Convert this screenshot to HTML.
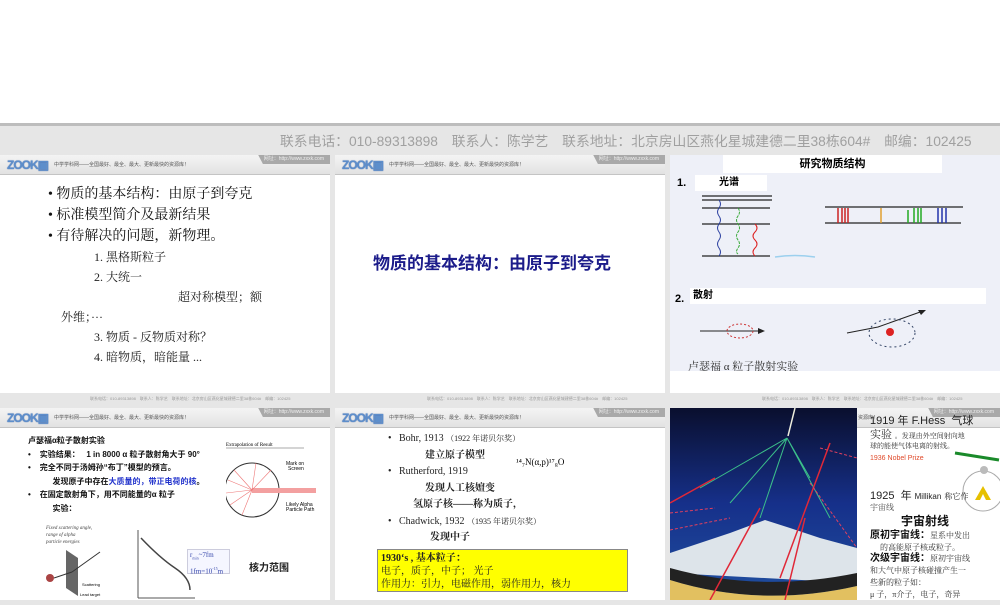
<!DOCTYPE html>
<html><head><meta charset="utf-8"><style>
*{margin:0;padding:0;box-sizing:border-box}
body{width:1000px;height:600px;overflow:hidden;background:#fff;position:relative;font-family:"Liberation Sans","Noto Sans CJK SC",sans-serif}
.a{position:absolute}
.band{left:0;top:123px;width:1000px;height:482px;background:#e6e6e6;border-top:3px solid #bdbdbd}
.slide{background:#fff;overflow:hidden}
.hdr{position:absolute;left:0;top:0;width:100%;height:20px;background:linear-gradient(#f4f4f4,#e2e2e2);border-bottom:1px solid #c4c4c4}
.logo{position:absolute;left:7px;top:3px;font:bold 12px "Liberation Sans",sans-serif;color:#5d8ecb;letter-spacing:-1px;text-shadow:0 0 1px #1d4d9b}
.htx{position:absolute;left:54px;top:6px;font-size:5px;color:#555;white-space:nowrap}
.url{position:absolute;right:0;top:0;width:78px;height:9px;background:#a9a9a9;color:#eee;font-size:5px;line-height:9px;text-align:right;padding-right:6px;clip-path:polygon(8% 0,100% 0,100% 100%,14% 100%)}
.ftr{position:absolute;font-size:4px;color:#999;white-space:nowrap}
.cn{font-family:"Liberation Serif","Noto Serif CJK SC",serif}
.l{position:absolute;white-space:nowrap;line-height:1}
</style></head><body>
<div class="a band"></div>
<div class="a" style="left:280px;top:130px;font-size:13.8px;color:#a0a0a0;white-space:nowrap">联系电话：010-89313898　联系人：陈学艺　联系地址：北京房山区燕化星城建德二里38栋604#　邮编：102425</div>

<div class="a slide" style="left:0;top:155px;width:330px;height:238px">
 <div class="hdr"><div class="logo">ZOOK▣</div><div class="htx">中学学科网——全国最好、最全、最大、更新最快的资源库！</div><div class="url">网址：http://www.zxxk.com</div></div>
 <div class="a cn" style="left:48px;top:29px;font-size:14px;line-height:21px;color:#111">• 物质的基本结构：由原子到夸克<br>• 标准模型简介及最新结果<br>• 有待解决的问题，新物理。</div>
 <div class="a cn" style="left:94px;top:92px;font-size:12px;line-height:20px;color:#222">1. 黑格斯粒子<br>2. 大统一</div>
 <div class="a cn" style="left:178px;top:133px;font-size:12px;color:#222">超对称模型；额</div>
 <div class="a cn" style="left:61px;top:153px;font-size:12px;color:#222">外维；···</div>
 <div class="a cn" style="left:94px;top:172px;font-size:12px;line-height:20px;color:#222">3. 物质 - 反物质对称？<br>4. 暗物质，暗能量 ...</div>
</div>
<div class="a slide" style="left:335px;top:155px;width:330px;height:238px">
 <div class="hdr"><div class="logo">ZOOK▣</div><div class="htx">中学学科网——全国最好、最全、最大、更新最快的资源库！</div><div class="url">网址：http://www.zxxk.com</div></div>
 <div class="a" style="left:38px;top:94px;font-size:17px;font-weight:bold;color:#1c1c8a;white-space:nowrap">物质的基本结构：由原子到夸克</div>
</div>
<div class="a slide" style="left:670px;top:155px;width:330px;height:238px;background:#eef0f8">
 <div class="a" style="left:53px;top:0;width:219px;height:18px;background:#fff;text-align:center;font-size:11px;font-weight:bold;line-height:18px">研究物质结构</div>
 <div class="a" style="left:7px;top:22px;font-weight:bold;font-size:11px">1.</div>
 <div class="a" style="left:25px;top:20px;width:72px;height:16px;background:#fff;font-size:10px;font-weight:bold;line-height:16px;padding-left:24px">光谱</div>
 <svg class="a" style="left:0;top:0" width="330" height="238">
  <g stroke="#222" stroke-width="1.2"><line x1="32" y1="41" x2="102" y2="41"/><line x1="32" y1="45" x2="102" y2="45"/><line x1="32" y1="53" x2="100" y2="53"/><line x1="32" y1="69" x2="100" y2="69"/><line x1="32" y1="101" x2="100" y2="101"/>
  <line x1="155" y1="52" x2="293" y2="52"/><line x1="155" y1="68" x2="291" y2="68"/></g>
  <path d="M49 45 q3 4 0 8 q-3 4 0 8 q3 4 0 8 q-3 4 0 8 q3 4 0 8 q-3 4 0 8 q3 4 0 8" stroke="#2a3fa0" fill="none"/>
  <path d="M68 53 q3 4 0 8 q-3 4 0 8 q3 4 0 8 q-3 4 0 8 q3 4 0 8 q-3 4 0 6" stroke="#3aaa3a" fill="none" stroke-dasharray="3 1"/>
  <path d="M85 69 q4 4 0 8 q-4 4 0 8 q4 4 0 8 q-4 4 0 8" stroke="#d22" fill="none"/>
  <path d="M105 102 q20 -3 40 0" stroke="#9cd0ee" fill="none" stroke-width="1.5"/>
  <g stroke-width="1.5"><path d="M168 53v15M172 53v15M175 53v15M178 53v15" stroke="#c22"/><path d="M211 53v15" stroke="#e0a030"/><path d="M238 55v13M244 53v15M248 53v15M251 53v15" stroke="#2a2"/><path d="M268 53v15M272 53v15M276 53v15" stroke="#23a"/></g>
  <path d="M30 176 H92" stroke="#222"/><path d="M95 176 l-7 -3 v6z" fill="#222"/>
  <ellipse cx="70" cy="176" rx="13" ry="7" fill="none" stroke="#c33" stroke-dasharray="2 2"/>
  <path d="M177 178 L208 172 L253 156" stroke="#222" fill="none"/><path d="M256 155 l-8 0 l3 5z" fill="#222"/>
  <circle cx="220" cy="177" r="4" fill="#d22"/>
  <ellipse cx="222" cy="178" rx="23" ry="14" fill="none" stroke="#346" stroke-dasharray="2 3"/>
 </svg>
 <div class="a" style="left:5px;top:138px;font-weight:bold;font-size:11px">2.</div>
 <div class="a" style="left:20px;top:133px;width:296px;height:16px;background:#fff;font-size:10px;font-weight:bold;line-height:16px;padding-left:3px">散射</div>
 <div class="a cn" style="left:18px;top:203px;font-size:11px;color:#333">卢瑟福 α 粒子散射实验</div>
 <div class="a" style="left:0;top:216px;width:330px;height:22px;background:#fff"></div>
</div>

<div class="ftr" style="left:90px;top:396px">联系电话：010-89313898　联系人：陈学艺　联系地址：北京房山区燕化星城建德二里38栋604#　邮编：102425</div>
<div class="ftr" style="left:427px;top:396px">联系电话：010-89313898　联系人：陈学艺　联系地址：北京房山区燕化星城建德二里38栋604#　邮编：102425</div>
<div class="ftr" style="left:762px;top:396px">联系电话：010-89313898　联系人：陈学艺　联系地址：北京房山区燕化星城建德二里38栋604#　邮编：102425</div>

<div class="a slide" style="left:0;top:408px;width:330px;height:192px">
 <div class="hdr"><div class="logo">ZOOK▣</div><div class="htx">中学学科网——全国最好、最全、最大、更新最快的资源库！</div><div class="url">网址：http://www.zxxk.com</div></div>
 <div class="a" style="left:28px;top:26px;font-size:8px;font-weight:bold;line-height:13.5px;color:#111;white-space:nowrap">卢瑟福α粒子散射实验<br>•&nbsp;&nbsp;&nbsp; 实验结果：&nbsp;&nbsp; 1 in 8000 α 粒子散射角大于 90°<br>•&nbsp;&nbsp;&nbsp; 完全不同于汤姆孙“布丁”模型的预言。<br>&nbsp;&nbsp;&nbsp;&nbsp;&nbsp;&nbsp;&nbsp;&nbsp;&nbsp;&nbsp;&nbsp;发现原子中存在<span style="color:#2233cc">大质量的，带正电荷的核</span>。<br>•&nbsp;&nbsp;&nbsp; 在固定散射角下，用不同能量的α 粒子<br>&nbsp;&nbsp;&nbsp;&nbsp;&nbsp;&nbsp;&nbsp;&nbsp;&nbsp;&nbsp;&nbsp;实验：</div>
 <svg class="a" style="left:226px;top:30px" width="100" height="110">
  <text x="0" y="8" font-size="5" font-family="Liberation Serif">Extrapolation of Result</text><line x1="0" y1="10" x2="78" y2="10" stroke="#aaa"/>
  <circle cx="26" cy="52" r="27" fill="none" stroke="#333"/>
  <rect x="26" y="50" width="64" height="5" fill="#f3a0a0"/>
  <g stroke="#e77" stroke-width=".6"><line x1="26" y1="52" x2="8" y2="32"/><line x1="26" y1="52" x2="2" y2="42"/><line x1="26" y1="52" x2="0" y2="55"/><line x1="26" y1="52" x2="4" y2="67"/><line x1="26" y1="52" x2="16" y2="77"/><line x1="26" y1="52" x2="30" y2="25"/><line x1="26" y1="52" x2="45" y2="32"/></g>
  <text x="60" y="27" font-size="5">Mark on</text><text x="62" y="32" font-size="5">Screen</text>
  <text x="60" y="68" font-size="5">Likely Alpha</text><text x="60" y="73" font-size="5">Particle Path</text>
 </svg>
 <div class="a" style="left:46px;top:117px;font-size:5px;font-style:italic;font-family:'Liberation Serif';line-height:7px;color:#444">Fixed scattering angle,<br>range of alpha<br>particle energies</div>
 <svg class="a" style="left:44px;top:140px" width="70" height="52"><polygon points="22,2 34,10 34,48 22,40" fill="#666"/><circle cx="6" cy="30" r="4" fill="#a44"/><line x1="10" y1="30" x2="28" y2="24" stroke="#333"/><line x1="28" y1="24" x2="56" y2="4" stroke="#333"/><text x="38" y="38" font-size="4">Scattering</text><text x="36" y="48" font-size="4">Lead target</text></svg>
 <svg class="a" style="left:135px;top:120px" width="60" height="72"><line x1="3" y1="2" x2="3" y2="70" stroke="#555"/><line x1="3" y1="70" x2="60" y2="70" stroke="#555"/><path d="M6 10 Q25 30 40 40 T55 62" stroke="#444" fill="none" stroke-width="1.5"/></svg>
 <div class="a" style="left:187px;top:141px;width:43px;height:25px;border:1px solid #ccd;background:#f5f6ff;font:7px 'Liberation Serif',serif;color:#3344aa;line-height:11px;padding-left:2px">r<sub style="font-size:4px">min</sub>~7fm<br>1fm=10<sup style="font-size:4px">-15</sup>m</div>
 <div class="a" style="left:249px;top:151px;font-size:10px;font-weight:bold;color:#222">核力范围</div>
</div>
<div class="a slide" style="left:335px;top:408px;width:330px;height:192px">
 <div class="hdr"><div class="logo">ZOOK▣</div><div class="htx">中学学科网——全国最好、最全、最大、更新最快的资源库！</div><div class="url">网址：http://www.zxxk.com</div></div>
 <div class="a cn" style="left:53px;top:23px;font-size:10px;line-height:16.5px;color:#222;white-space:nowrap">•&nbsp;&nbsp; Bohr, 1913 <span style="font-size:8px">（1922 年诺贝尔奖）</span><br><b style="margin-left:37px">建立原子模型</b><br>•&nbsp;&nbsp; Rutherford, 1919<br><b style="margin-left:37px">发现人工核嬗变</b><br><b style="margin-left:25px">氢原子核——称为质子，</b><br>•&nbsp;&nbsp; Chadwick, 1932 <span style="font-size:8px">（1935 年诺贝尔奖）</span><br><b style="margin-left:42px">发现中子</b></div>
 <div class="a cn" style="left:181px;top:49px;font-size:9px">¹⁴₇N(α,p)¹⁷₈O</div>
 <div class="a" style="left:42px;top:141px;width:251px;height:43px;background:#ffff00;border:1px solid #888;font:10px 'Liberation Serif','Noto Serif CJK SC',serif;line-height:13px;padding:2px 3px;color:#222;white-space:nowrap"><b>1930‘s , 基本粒子：</b><br>电子，质子，中子； 光子<br>作用力：引力，电磁作用，弱作用力，核力</div>
</div>
<div class="a slide" style="left:670px;top:408px;width:330px;height:192px">
 <div class="hdr" style="left:187px;width:143px"><div class="url">网址：http://www.zxxk.com</div><div class="htx" style="left:1px">资源库！</div></div>
 <svg class="a" style="left:0;top:0" width="187" height="192">
  <defs><linearGradient id="sk" x1="0" y1="0" x2="0" y2="1"><stop offset="0" stop-color="#0a0f2e"/><stop offset=".5" stop-color="#16308a"/><stop offset="1" stop-color="#2050a0"/></linearGradient></defs>
  <rect width="187" height="192" fill="url(#sk)"/>
  <path d="M0 145 L30 135 L60 125 L95 112 L120 120 L150 130 L187 140 L187 175 L0 165Z" fill="#dde4ea"/>
  <path d="M0 160 Q90 185 187 165 L187 178 Q90 200 0 172Z" fill="#222"/>
  <path d="M0 172 Q90 200 187 178 L187 192 L0 192Z" fill="#e2c060"/>
  <g stroke="#3bbf8a" stroke-width="1" fill="none"><path d="M117 30 L30 80M117 30 L60 95M117 30 L90 110M117 30 L140 70M117 30 L160 110M117 30 L100 80"/></g>
  <g stroke="#e02838" stroke-width="1.5" fill="none"><path d="M45 70 L0 95M90 100 L40 192M160 35 L110 170M135 110 L115 192"/></g>
  <g stroke="#e04060" stroke-dasharray="3 2" fill="none"><path d="M0 105 L45 100M0 122 L60 110M150 40 L187 50M140 75 L187 140"/></g>
  <line x1="125" y1="0" x2="118" y2="28" stroke="#eed" stroke-width="1.5"/>
 </svg>
 <div class="l" style="left:200px;top:8px;font-size:11px;color:#222">1919 年 F.Hess&nbsp; 气球</div>
 <div class="l cn" style="left:200px;top:22px;font-size:11px;color:#333">实验 <span style="font-size:7px">。发现由外空间射向地</span></div>
 <div class="l cn" style="left:200px;top:35px;font-size:7px;color:#333">球的能使气体电离的射线。</div>
 <div class="l" style="left:200px;top:47px;font-size:7px;color:#e04a2a">1936 Nobel Prize</div>
 <svg class="a" style="left:283px;top:40px" width="47" height="65"><line x1="2" y1="5" x2="46" y2="12" stroke="#1a8a2a" stroke-width="3"/><circle cx="30" cy="43" r="20" fill="none" stroke="#aaa"/><circle cx="31" cy="22" r="4" fill="#bbb"/><path d="M22 52 L30 38 L38 52 L33 52 L30 46 L27 52Z" fill="#e6c000"/></svg>
 <div class="l" style="left:200px;top:83px;font-size:11px;color:#222">1925&nbsp; 年 <span style="font-size:8px">Millikan</span> <span class="cn" style="font-size:8px">称它作</span></div>
 <div class="l cn" style="left:200px;top:96px;font-size:8px;color:#444">宇宙线</div>
 <div class="l" style="left:231px;top:107px;font-size:12px;font-weight:bold;color:#111">宇宙射线</div>
 <div class="l" style="left:200px;top:123px;font-size:10px;font-weight:bold;color:#111">原初宇宙线：<span class="cn" style="font-size:8px;font-weight:normal;color:#333">星系中发出</span></div>
 <div class="l cn" style="left:210px;top:136px;font-size:8px;color:#333">的高能原子核或粒子。</div>
 <div class="l" style="left:200px;top:146px;font-size:10px;font-weight:bold;color:#111">次级宇宙线：<span class="cn" style="font-size:8px;font-weight:normal;color:#333">原初宇宙线</span></div>
 <div class="l cn" style="left:200px;top:159px;font-size:8px;color:#333">和大气中原子核碰撞产生一</div>
 <div class="l cn" style="left:200px;top:171px;font-size:8px;color:#333">些新的粒子如：</div>
 <div class="l cn" style="left:200px;top:183px;font-size:8px;color:#333">μ 子，π介子，电子，奇异</div>
</div>
</body></html>
